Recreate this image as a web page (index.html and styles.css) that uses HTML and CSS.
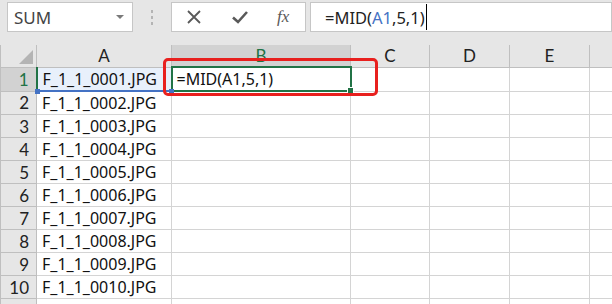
FILE: index.html
```html
<!DOCTYPE html>
<html>

<head>
    <meta charset="utf-8">
    <link rel="stylesheet" href="styles.css">
</head>

<body>
    <div class="sheet">
        <!-- name box + formula bar -->
        <div class="formula-bar">
            <div class="name-box">
                <span>SUM</span>
                <span class="caret"></span>
            </div>
            <div class="grip"><i></i><i></i><i></i></div>
            <div class="fx-box">
                <svg width="16" height="16" viewBox="0 0 16 16">
                    <path d="M2 2 L14 14 M14 2 L2 14" stroke="#595959" stroke-width="1.8" fill="none"/>
                </svg>
                <svg width="18" height="16" viewBox="0 0 18 16">
                    <path d="M2 8.5 L7 13 L16 3" stroke="#595959" stroke-width="2.6" fill="none"/>
                </svg>
                <span class="fx">fx</span>
            </div>
            <div class="input-box">
                <span>=MID(</span><span class="ref">A1</span><span>,5,1)</span><span class="cursor"></span>
            </div>
        </div>

        <!-- the grid -->
        <table class="grid">
            <colgroup>
                <col class="w-head">
                <col class="w-a">
                <col class="w-b">
                <col class="w-c">
                <col class="w-d">
                <col class="w-e">
                <col>
            </colgroup>
            <tr class="col-heads">
                <th class="corner"><span class="tri"></span></th>
                <th>A</th>
                <th class="active-col">B</th>
                <th>C</th>
                <th>D</th>
                <th>E</th>
                <th></th>
            </tr>
            <tr>
                <th class="active-row">1</th>
                <td class="ref-cell">F_1_1_0001.JPG<span class="dot dl"></span><span class="dot dr"></span></td>
                <td class="sel-cell">=MID(A1,5,1)<span class="handle"></span></td>
                <td></td><td></td><td></td><td></td>
            </tr>
            <tr><th>2</th><td>F_1_1_0002.JPG</td><td></td><td></td><td></td><td></td><td></td></tr>
            <tr><th>3</th><td>F_1_1_0003.JPG</td><td></td><td></td><td></td><td></td><td></td></tr>
            <tr><th>4</th><td>F_1_1_0004.JPG</td><td></td><td></td><td></td><td></td><td></td></tr>
            <tr><th>5</th><td>F_1_1_0005.JPG</td><td></td><td></td><td></td><td></td><td></td></tr>
            <tr><th>6</th><td>F_1_1_0006.JPG</td><td></td><td></td><td></td><td></td><td></td></tr>
            <tr><th>7</th><td>F_1_1_0007.JPG</td><td></td><td></td><td></td><td></td><td></td></tr>
            <tr><th>8</th><td>F_1_1_0008.JPG</td><td></td><td></td><td></td><td></td><td></td></tr>
            <tr><th>9</th><td>F_1_1_0009.JPG</td><td></td><td></td><td></td><td></td><td></td></tr>
            <tr><th>10</th><td>F_1_1_0010.JPG</td><td></td><td></td><td></td><td></td><td></td></tr>
            <tr><th></th><td></td><td></td><td></td><td></td><td></td><td></td></tr>
        </table>

        <!-- red annotation box -->
        <div class="mark"></div>
    </div>
</body>

</html>
```

FILE: styles.css
```css
/* page */
body {
    margin: 0;
    background-color: #e6e6e6;
}

.sheet {
    position: relative;
    width: 612px;
    height: 304px;
    overflow: hidden;
    background-color: #e6e6e6;
}

/* formula bar row */
.formula-bar {
    display: flex;
    align-items: flex-start;
    height: 45px;
    padding-top: 2px;
    box-sizing: border-box;
}

.name-box,
.fx-box,
.input-box {
    height: 30px;
    box-sizing: border-box;
    background-color: #fff;
    border: 1px solid #c6c6c6;
    display: flex;
    align-items: center;
}

.name-box {
    margin-left: 7px;
    width: 126px;
    padding: 0 0 0 6px;
    justify-content: space-between;
    font-family: "Noto Sans", sans-serif;
    font-size: 17px;
    color: #444;
}

.caret {
    width: 0;
    height: 0;
    margin-right: 8px;
    border-left: 4px solid transparent;
    border-right: 4px solid transparent;
    border-top: 4px solid #7a7a7a;
}

.grip {
    width: 38px;
    height: 30px;
    display: flex;
    flex-direction: column;
    align-items: center;
    justify-content: center;
    gap: 3px;
}

.grip i {
    width: 2px;
    height: 3px;
    background-color: #b4b4b4;
}

.fx-box {
    width: 135px;
    padding-left: 14px;
    gap: 29px;
}

.fx {
    font-family: "Liberation Serif", serif;
    font-style: italic;
    font-size: 17px;
    color: #595959;
    margin-left: -1px;
}

.input-box {
    flex: 1;
    margin-left: 4px;
    padding-left: 14px;
    font-family: "Noto Sans", sans-serif;
    font-size: 16.5px;
    color: #222;
}

.input-box .ref {
    color: #4472c4;
}

.cursor {
    width: 1px;
    height: 26px;
    background-color: #000;
    margin-left: 1px;
}

/* spreadsheet grid */
.grid {
    border-collapse: collapse;
    table-layout: fixed;
    width: 640px;
    background-color: #fff;
}

.w-head { width: 36px; }
.w-a { width: 135px; }
.w-b { width: 179px; }
.w-c { width: 79px; }
.w-d { width: 80px; }
.w-e { width: 80px; }

.grid td,
.grid th {
    height: 22px;
    padding: 0;
    border: 1px solid #d4d4d4;
    white-space: nowrap;
    overflow: visible;
}

.grid td {
    position: relative;
    padding-left: 5px;
    font-family: "Noto Sans", sans-serif;
    font-size: 16px;
    color: #111;
}

.grid th {
    background-color: #e6e6e6;
    border-color: #bfbfbf;
    font-family: "Lato", sans-serif;
    font-weight: normal;
    font-size: 17px;
    color: #222;
}

.col-heads th {
    height: 21px;
    border-top: none;
}

.grid tr th:first-child {
    text-align: right;
    padding-right: 7px;
}

.grid .corner {
    position: relative;
}

.tri {
    position: absolute;
    right: 3px;
    bottom: 3px;
    width: 0;
    height: 0;
    border-left: 14px solid transparent;
    border-bottom: 14px solid #b4b4b4;
}

.grid .active-col {
    background-color: #d2d2d2;
    color: #217346;
    border-bottom: 2px solid #217346;
}

.grid .active-row {
    background-color: #d2d2d2;
    color: #217346;
    border-right: 2px solid #217346;
}

/* A1: referenced cell */
.grid .ref-cell {
    background-color: #e8f0fb;
    border-bottom: 2px solid #4472c4;
}

.dot {
    position: absolute;
    bottom: -4px;
    width: 5px;
    height: 5px;
    background-color: #4472c4;
}

.dl { left: -3px; }
.dr { right: -3px; }

/* B1: active cell */
.grid .sel-cell {
    border: 2px solid #217346;
    padding-left: 4px;
}

.handle {
    position: absolute;
    right: -4px;
    bottom: -4px;
    width: 5px;
    height: 5px;
    background-color: #217346;
    border: 1px solid #fff;
}

/* red annotation */
.mark {
    position: absolute;
    left: 163px;
    top: 58px;
    width: 215px;
    height: 38px;
    box-sizing: border-box;
    border: 3px solid #e8201e;
    border-radius: 5px;
}
```
